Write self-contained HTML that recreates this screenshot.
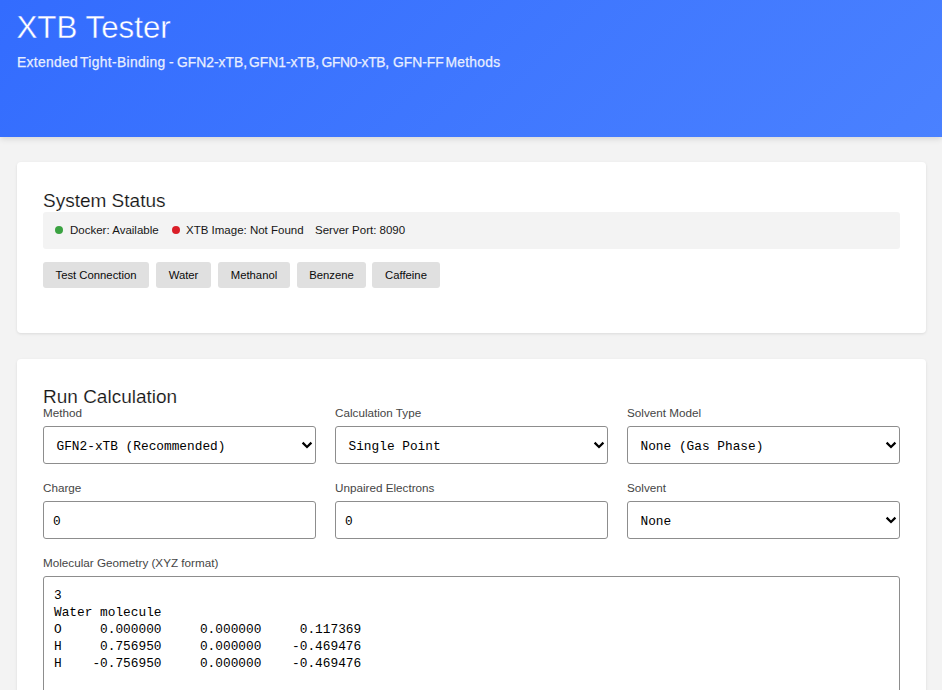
<!DOCTYPE html>
<html>
<head>
<meta charset="utf-8">
<style>
*{box-sizing:border-box;margin:0;padding:0}
html,body{width:942px;height:690px;overflow:hidden}
body{background:#f3f3f3;font-family:"Liberation Sans",sans-serif;color:#161616;position:relative}
.hdr{position:absolute;left:0;top:0;width:942px;height:137px;background:linear-gradient(135deg,#336cfe 0%,#4a81ff 100%);box-shadow:0 2px 6px rgba(0,0,0,0.12)}
.hdr h1{position:absolute;left:16.5px;top:9.9px;font-size:31.3px;font-weight:normal;color:#fff;-webkit-text-stroke:0.4px #3970fe;white-space:nowrap;letter-spacing:0}
.hdr p{position:absolute;left:0;top:54px;font-size:13.85px;color:#e8eeff;-webkit-text-stroke:0.25px #e8eeff;white-space:nowrap}
.card{position:absolute;left:17px;width:909px;background:#fff;border-radius:4px;box-shadow:0 1px 3px rgba(0,0,0,0.1)}
.c1{top:162px;height:171px}
.c2{top:359px;height:400px}
.h2{position:absolute;left:26px;margin-top:0.8px;-webkit-text-stroke:0.15px #fff;font-size:19px;font-weight:normal;color:#161616;white-space:nowrap}
.status{position:absolute;left:26px;top:50px;width:857px;height:37px;background:#f3f3f3;border-radius:3px;font-size:11.5px;color:#161616}
.status span{position:absolute;top:11.5px;white-space:nowrap}
.dot{position:absolute;top:14px;width:8px;height:8px;border-radius:50%}
.btn{position:absolute;top:100px;height:26px;background:#e0e0e0;border-radius:3px;font-size:11.3px;color:#0a0a0a;text-align:center;line-height:26px;white-space:nowrap}
.lbl{position:absolute;font-size:11.7px;margin-top:-0.5px;color:#454545;white-space:nowrap}
.fld{position:absolute;height:38px;width:273px;border:1px solid #8d8d8d;border-radius:3px;background:#fff;font-family:"Liberation Mono",monospace;font-size:12.8px;color:#000}
.fld span{position:absolute;left:9px;top:11.5px;white-space:pre}
.sel span{left:12.5px}
.chev{position:absolute;right:2px;top:14px}
.ta{position:absolute;left:26px;top:217px;width:857px;height:200px;border:1px solid #8d8d8d;border-radius:3px;background:#fff;font-family:"Liberation Mono",monospace;font-size:12.8px;color:#000;white-space:pre;line-height:17px;padding:10px 10px}
.sub span{position:absolute;top:0}
</style>
</head>
<body>
<div class="hdr">
  <h1>XTB Tester</h1>
  <p class="sub"><span style="left:17px;letter-spacing:0.3px">Extended</span><span style="left:80px;letter-spacing:0.35px">Tight-Binding</span><span style="left:169px">-</span><span style="left:177px">GFN2-xTB,</span><span style="left:249px">GFN1-xTB,</span><span style="left:321.5px;letter-spacing:-0.3px">GFN0-xTB,</span><span style="left:393px">GFN-FF</span><span style="left:445.5px;letter-spacing:0.25px">Methods</span></p>
</div>

<div class="card c1">
  <div class="h2" style="top:27px">System Status</div>
  <div class="status">
    <div class="dot" style="left:12px;background:#3aa241"></div>
    <span style="left:27px">Docker: Available</span>
    <div class="dot" style="left:129px;background:#da1e28"></div>
    <span style="left:143px">XTB Image: Not Found</span>
    <span style="left:272px">Server Port: 8090</span>
  </div>
  <div class="btn" style="left:26px;width:106px">Test Connection</div>
  <div class="btn" style="left:139px;width:55px">Water</div>
  <div class="btn" style="left:201px;width:72px">Methanol</div>
  <div class="btn" style="left:280px;width:69px">Benzene</div>
  <div class="btn" style="left:355px;width:68px">Caffeine</div>
</div>

<div class="card c2">
  <div class="h2" style="top:26px">Run Calculation</div>
  <div class="lbl" style="left:26px;top:47px">Method</div>
  <div class="lbl" style="left:318px;top:47px">Calculation Type</div>
  <div class="lbl" style="left:610px;top:47px">Solvent Model</div>
  <div class="fld sel" style="left:26px;top:67px"><span>GFN2-xTB (Recommended)</span><svg class="chev" width="12" height="8" viewBox="0 0 12 8"><path d="M1.6 1.6 L6 6 L10.4 1.6" fill="none" stroke="#000" stroke-width="2.2"/></svg></div>
  <div class="fld sel" style="left:318px;top:67px"><span>Single Point</span><svg class="chev" width="12" height="8" viewBox="0 0 12 8"><path d="M1.6 1.6 L6 6 L10.4 1.6" fill="none" stroke="#000" stroke-width="2.2"/></svg></div>
  <div class="fld sel" style="left:610px;top:67px"><span>None (Gas Phase)</span><svg class="chev" width="12" height="8" viewBox="0 0 12 8"><path d="M1.6 1.6 L6 6 L10.4 1.6" fill="none" stroke="#000" stroke-width="2.2"/></svg></div>

  <div class="lbl" style="left:26px;top:122px">Charge</div>
  <div class="lbl" style="left:318px;top:122px">Unpaired Electrons</div>
  <div class="lbl" style="left:610px;top:122px">Solvent</div>
  <div class="fld" style="left:26px;top:142px"><span>0</span></div>
  <div class="fld" style="left:318px;top:142px"><span>0</span></div>
  <div class="fld sel" style="left:610px;top:142px"><span>None</span><svg class="chev" width="12" height="8" viewBox="0 0 12 8"><path d="M1.6 1.6 L6 6 L10.4 1.6" fill="none" stroke="#000" stroke-width="2.2"/></svg></div>

  <div class="lbl" style="left:26px;top:197px">Molecular Geometry (XYZ format)</div>
  <div class="ta">3
Water molecule
O     0.000000     0.000000     0.117369
H     0.756950     0.000000    -0.469476
H    -0.756950     0.000000    -0.469476</div>
</div>
</body>
</html>
